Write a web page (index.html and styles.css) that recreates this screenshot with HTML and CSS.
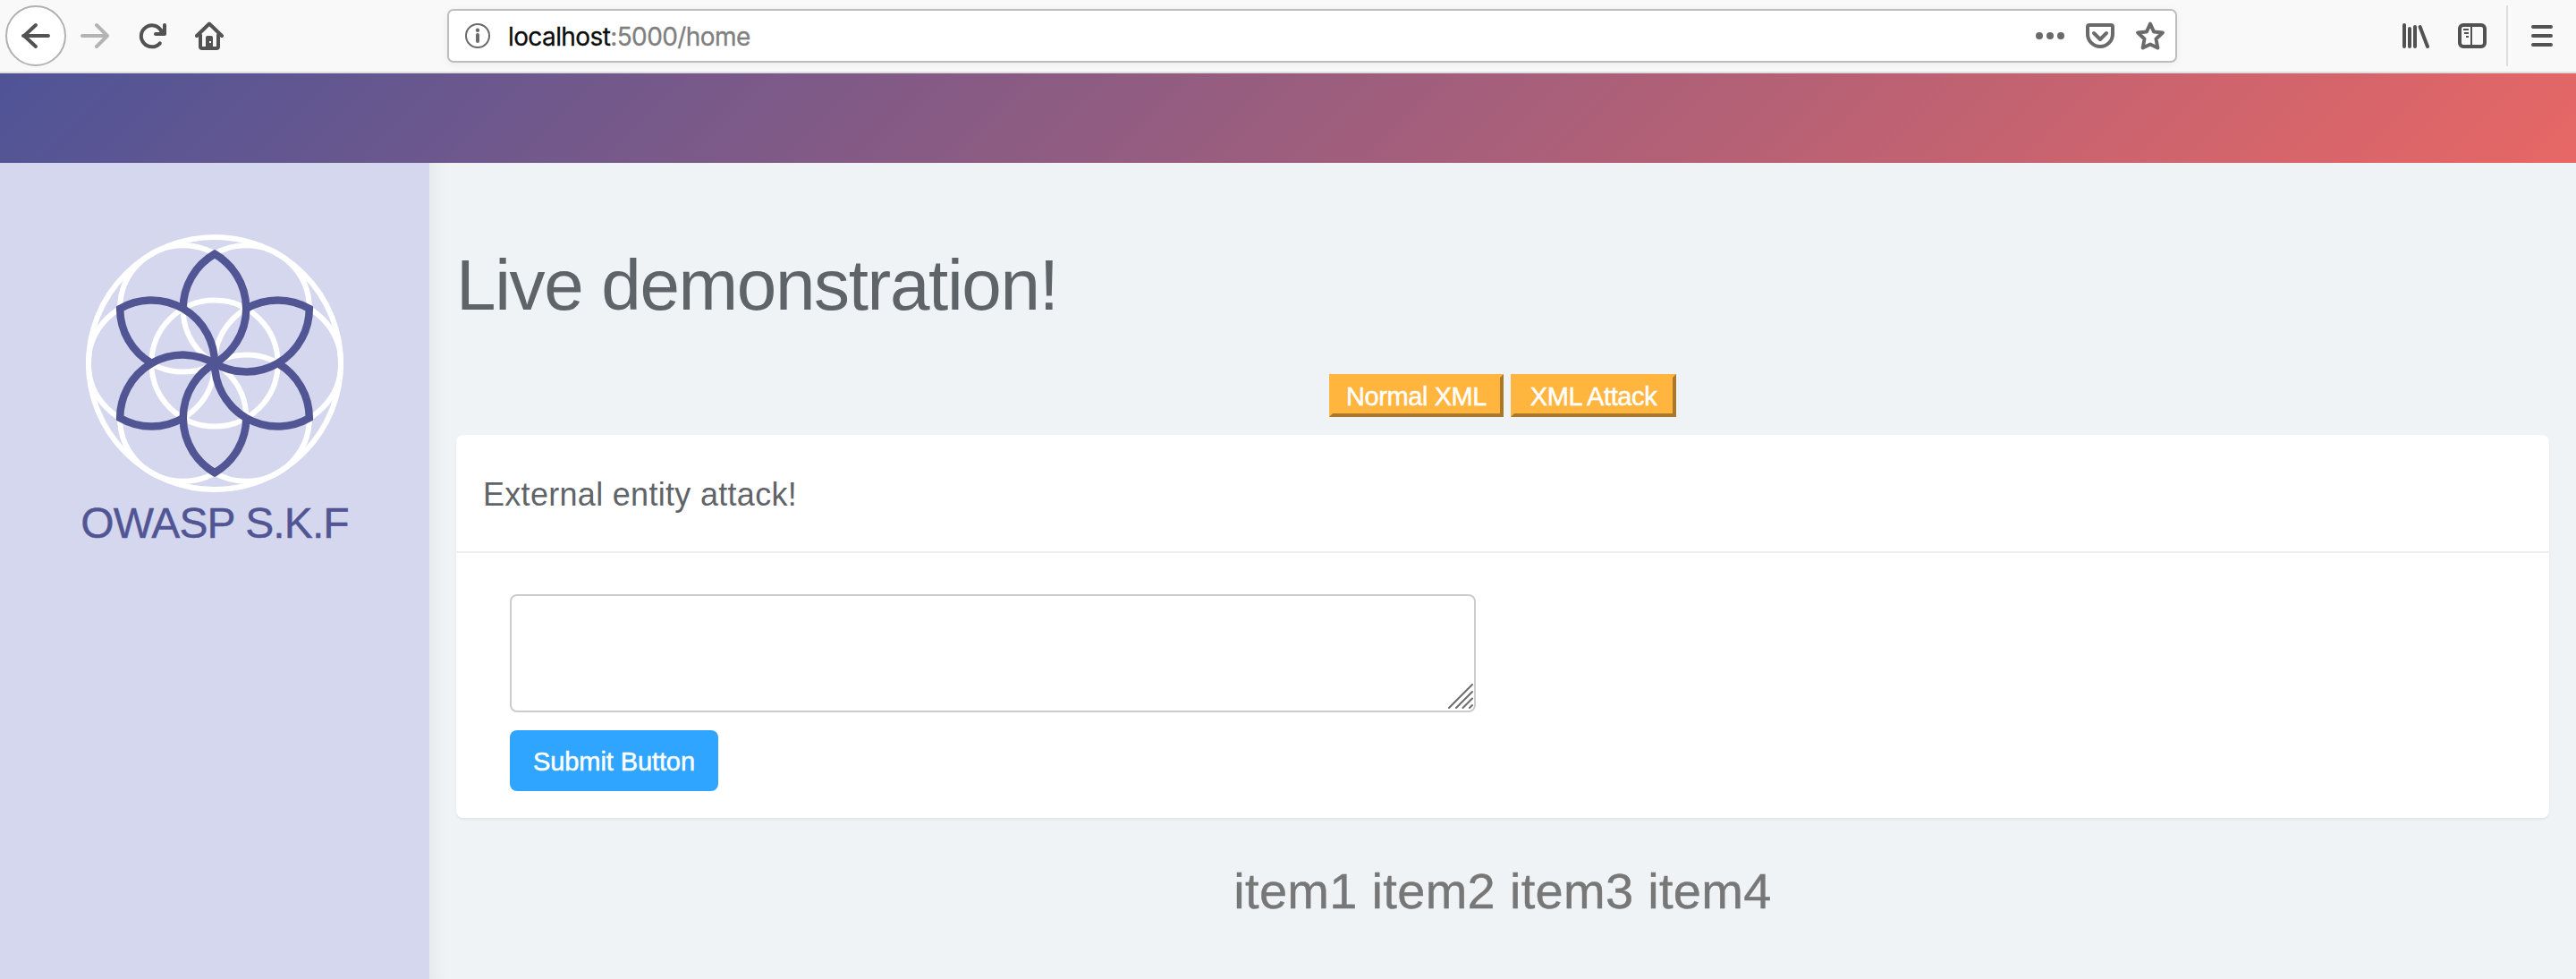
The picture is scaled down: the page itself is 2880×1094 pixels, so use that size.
FILE: index.html
```html
<!DOCTYPE html>
<html lang="en">
<head>
<meta charset="utf-8">
<title>Live demonstration</title>
<link rel="stylesheet" href="styles.css">
</head>
<body>
<header class="toolbar">
  <div class="nav">
    <span class="back"><svg class="icon" viewBox="0 0 32 32"><path d="M30 16H2M16 4L3 16l13 12"/></svg></span>
    <svg class="icon icon-off" viewBox="0 0 32 32"><path d="M2 16h28M18 4l12 12-12 12"/></svg>
    <svg class="icon reload" viewBox="0 0 32 32"><path d="M24.8 24.3A12 12 0 1 1 26.6 11"/><path d="M30 4v10H20" /><path class="solid" d="M30 6v8h-8z"/></svg>
    <svg class="icon home" viewBox="0 0 32 32"><path d="M2 16L16 2.500l14 13.500M6 15v13q0 2 2 2h16q2 0 2-2V15"/><path class="solid" d="M12 30V18q0-2 2-2h4q2 0 2 2v12z"/><rect class="knob" x="16" y="22" width="2" height="2"/></svg>
  </div>
  <div class="urlbar">
    <svg class="icon info" viewBox="0 0 32 32"><circle cx="16" cy="16" r="13"/><path class="stem" d="M16 15v7"/><circle class="dot" cx="16" cy="9.800" r="2.200"/></svg>
    <span class="url"><b class="host">localhost</b>:5000/home</span>
    <svg class="icon page-icon" viewBox="0 0 32 32"><circle class="dot" cx="4" cy="16" r="4"/><circle class="dot" cx="16" cy="16" r="4"/><circle class="dot" cx="28" cy="16" r="4"/></svg>
    <svg class="icon page-icon" viewBox="0 0 32 32"><path d="M4 4h24q2 0 2 2v8a14 14 0 0 1-28 0V6q0-2 2-2zM9 13l7 7 7-7"/></svg>
    <svg class="icon page-icon" viewBox="0 0 32 32"><path d="M16 2.500l4 9 9.800 1-7.300 7 1.800 10L16 25.500l-8.300 4 1.800-10-7.300-7 9.800-1z"/></svg>
  </div>
  <div class="tools">
    <svg class="icon" viewBox="0 0 32 32"><path d="M6 4v24M12 8v20M18 6v22M23.600 6L32 28" transform="translate(-2 0)"/></svg>
    <svg class="icon" viewBox="0 0 32 32"><rect x="2" y="4" width="28" height="24" rx="4"/><path class="thin" d="M15 5v22M6 9h6M7 13h5M9 17h3"/></svg>
    <span class="divider"></span>
    <svg class="icon" viewBox="0 0 32 32"><path d="M6 6h20M6 16h20M6 26h20"/></svg>
  </div>
</header>
<div class="banner"></div>
<div class="page">
  <aside class="sidebar">
    <svg class="logo" viewBox="-144 -144 288 288">
      <defs><path id="petal" d="M-35.300-61.100A70.600 70.600 0 0 1 0-122.200A70.600 70.600 0 0 1 0 0"/></defs>
      <g class="rings">
        <circle r="141"/><circle r="70.600"/>
        <circle cx="70.600" r="70.600"/><circle cx="-70.600" r="70.600"/>
        <circle cx="35.300" cy="61.100" r="70.600"/><circle cx="-35.300" cy="61.100" r="70.600"/>
        <circle cx="35.300" cy="-61.100" r="70.600"/><circle cx="-35.300" cy="-61.100" r="70.600"/>
      </g>
      <g class="petals">
        <use href="#petal"/><use href="#petal" transform="rotate(60)"/><use href="#petal" transform="rotate(120)"/>
        <use href="#petal" transform="rotate(180)"/><use href="#petal" transform="rotate(240)"/><use href="#petal" transform="rotate(300)"/>
      </g>
    </svg>
    <div class="brand">OWASP S.K.F</div>
  </aside>
  <main class="content">
    <h1 class="title">Live demonstration!</h1>
    <div class="actions">
      <button class="xml-btn">Normal XML</button>
      <button class="xml-btn attack">XML Attack</button>
    </div>
    <section class="card">
      <h2 class="card-head">External entity attack!</h2>
      <form class="card-body">
        <div class="field">
          <textarea class="input" aria-label="XML"></textarea>
          <svg class="grip" viewBox="0 0 28 28"><path d="M1 27L27 1M9 27L27 9M16.500 27L27 16.500M24 27l3-3"/></svg>
        </div>
        <button class="submit" type="button">Submit Button</button>
      </form>
    </section>
    <p class="items">item1 item2 item3 item4</p>
  </main>
</div>
</body>
</html>
```
FILE: styles.css
```css
* { box-sizing: border-box; }
body {
  margin: 0;
  height: 1094px;
  display: flex;
  flex-direction: column;
  overflow: hidden;
  background: #eff3f6;
  color: #5f6468;
  font-family: "Liberation Sans", Arial, sans-serif;
}

/* Browser toolbar */
.toolbar {
  display: flex;
  align-items: center;
  height: 82px;
  padding: 0 22px 0 6px;
  background: #f9f9fa;
  border-bottom: 2px solid #dfdfe1;
}
.nav { display: flex; align-items: center; width: 494px; }
.icon {
  flex: none;
  width: 32px;
  height: 32px;
  fill: none;
  stroke: #525253;
  stroke-width: 4;
  stroke-linecap: round;
  stroke-linejoin: round;
}
.icon .solid { fill: #525253; stroke: none; }
.icon .knob { fill: #f9f9fa; stroke: none; }
.icon .thin { stroke-width: 2; stroke-linecap: butt; }
.icon-off { stroke: #b4b4b5; margin-left: 16px; }
.reload, .home { margin-left: 32px; }
.back {
  display: flex;
  align-items: center;
  justify-content: center;
  width: 68px;
  height: 68px;
  border: 2px solid #b1b1b2;
  border-radius: 50%;
  background: #fff;
}
.urlbar {
  display: flex;
  align-items: center;
  width: 1934px;
  height: 60px;
  padding: 0 12px 0 16px;
  border: 2px solid #bdbdbe;
  border-radius: 7px;
  background: #fff;
  box-shadow: 0 2px 8px rgba(0, 0, 0, .06);
}
.info { stroke: #6a6a6b; stroke-width: 2; }
.info .stem { stroke-width: 4; }
.icon .dot { fill: #6a6a6b; stroke: none; }
.url {
  flex: 1;
  margin-left: 18px;
  padding-top: 2px;
  color: #7f7f80;
  font: 28px/34px Inter, sans-serif;
  letter-spacing: -.6px;
  -webkit-text-stroke: .3px currentColor;
}
.host { color: #0c0c0d; font-weight: 400; }
.page-icon { margin-left: 24px; stroke: #6a6a6b; }
.tools { display: flex; align-items: center; gap: 32px; margin-left: 250px; }
.divider { width: 2px; height: 68px; margin: 0 -10px; background: #dededf; }

.banner { flex: none; height: 100px; background: linear-gradient(135deg, #4f5497, #e76765); }

.page { display: flex; flex: 1; }
.sidebar {
  display: flex;
  flex-direction: column;
  align-items: center;
  width: 480px;
  padding-top: 80px;
  background: #d5d7ee;
}
.logo { width: 288px; height: 288px; fill: none; }
.rings { stroke: #fff; stroke-width: 6; }
.petals { stroke: #515594; stroke-width: 8.500; stroke-miterlimit: 10; }
.brand {
  margin-top: 7px;
  color: #515594;
  font-size: 48px;
  line-height: 56px;
  letter-spacing: -.9px;
  white-space: nowrap;
  -webkit-text-stroke: .4px currentColor;
}

.content {
  flex: 1;
  padding: 0 30px;
  box-shadow: inset 20px 0 20px -16px rgba(0, 0, 0, .05);
}
.title { margin: 93px 0 0; font-size: 80px; line-height: 88px; font-weight: 400; letter-spacing: -1.350px; }
.actions { display: flex; justify-content: center; gap: 8px; margin-top: 55px; }
.xml-btn {
  width: 195px;
  height: 48px;
  padding: 2px 0 0;
  border: 4px solid;
  border-color: #ffb53e #a9782a #a9782a #ffb53e;
  background: #ffb53e;
  color: #fff;
  font: 29px/38px "Liberation Sans", Arial, sans-serif;
  letter-spacing: -.4px;
  -webkit-text-stroke: .5px currentColor;
}
.attack { width: 185px; }
.card {
  margin-top: 20px;
  height: 428px;
  border-radius: 8px;
  background: #fff;
  box-shadow: 0 2px 3px rgba(0, 0, 0, .06);
}
.card-head {
  height: 132px;
  margin: 0;
  padding: 45px 30px 0;
  border-bottom: 2px solid #eee;
  font-size: 36px;
  line-height: 44px;
  font-weight: 400;
  letter-spacing: .3px;
}
.card-body { padding: 46px 60px 0; }
.field { position: relative; width: 1080px; height: 132px; }
.input { display: block; width: 100%; height: 100%; border: 2px solid #ccc; border-radius: 8px; resize: none; background: #fff; }
.grip { position: absolute; right: 3px; bottom: 4px; width: 28px; height: 28px; fill: none; stroke: #6c6c6c; stroke-width: 2; stroke-linecap: round; }
.submit {
  display: block;
  width: 233px;
  height: 68px;
  margin-top: 20px;
  padding: 1px 0 0;
  border: 0;
  border-radius: 8px;
  background: #30a5ff;
  color: #fff;
  font: 29px/40px "Liberation Sans", Arial, sans-serif;
  letter-spacing: -.1px;
  -webkit-text-stroke: .5px currentColor;
}
.items {
  margin: 50px 0 0;
  text-align: center;
  color: #777;
  font-size: 56px;
  line-height: 64px;
  letter-spacing: .3px;
  -webkit-text-stroke: .4px currentColor;
}
```
